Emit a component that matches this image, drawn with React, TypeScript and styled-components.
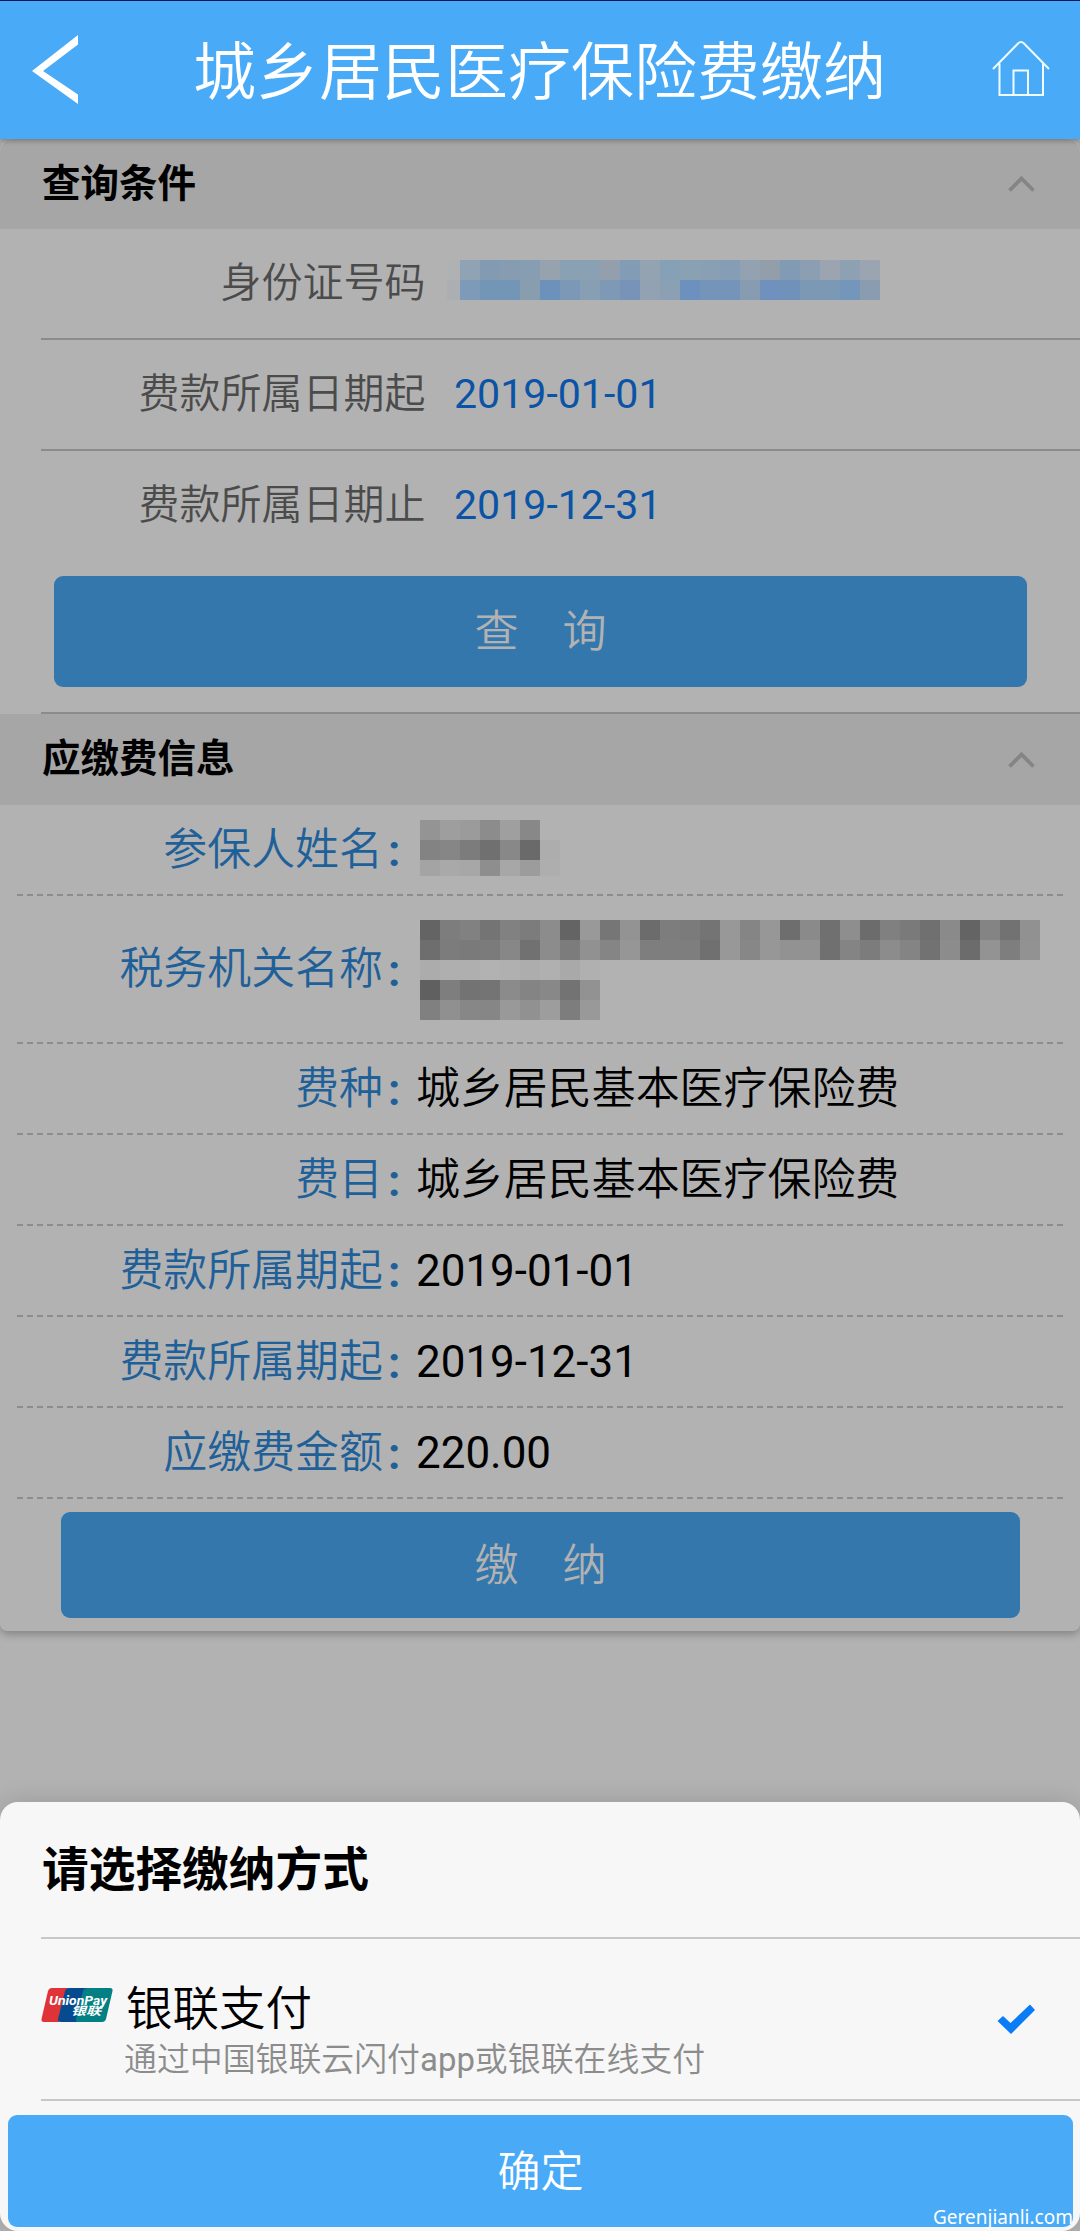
import React from "react";
import styled, { createGlobalStyle } from "styled-components";

const GlobalStyle = createGlobalStyle`
  * { box-sizing: border-box; }
  body {
    margin: 0;
    background: #b2b2b2;
    font-family: Roboto, "Noto Sans CJK SC", sans-serif;
  }
  button { font-family: inherit; border: 0; padding: 0; }
`;

const Page = styled.div`
  display: flex;
  flex-direction: column;
  width: 1080px;
  height: 2231px;
  overflow: hidden;
  background: #b2b2b2;
`;

const Header = styled.header`
  display: flex;
  align-items: center;
  flex: none;
  height: 139px;
  padding: 0 28px 0 30px;
  border-top: 1px solid #08155c;
  background: #49aaf7;
  z-index: 1;
  box-shadow: 0 1px 6px rgba(0, 0, 0, 0.35);
`;

const HeaderIcon = styled.svg`
  display: block;
  flex: none;
  width: 60px;
  height: 76px;
`;

const Title = styled.h1`
  flex: 1;
  margin: 0;
  padding: 6px 3px 0 0;
  text-align: center;
  font-size: 63px;
  font-weight: 350;
  line-height: 90px;
  color: #fff;
`;

const Card = styled.main`
  flex: none;
  height: 1492px;
  background: #b2b2b2;
  border-radius: 10px 10px 7px 7px;
  box-shadow: 0 3px 8px rgba(0, 0, 0, 0.28);
`;

const SectionHead = styled.div<{ $height: number; $first?: boolean }>`
  display: flex;
  align-items: center;
  justify-content: space-between;
  height: ${(p) => p.$height}px;
  padding: 0 44px 0 42px;
  background: #a6a6a6;
  border-radius: ${(p) => (p.$first ? "14px 14px 0 0" : "0")};
`;

const SectionTitle = styled.h2`
  margin: 0;
  font-size: 38.5px;
  font-weight: 700;
  line-height: 1.2;
  color: #000;
`;

const Chevron = styled.svg`
  width: 30px;
  height: 20px;
`;

const FieldRow = styled.div<{ $line?: boolean }>`
  display: flex;
  align-items: center;
  height: 111px;
  margin-left: 41px;
  padding-bottom: ${(p) => (p.$line ? 1 : 3)}px;
  border-bottom: ${(p) => (p.$line ? "2px solid #8b8b8b" : "0")};
`;

const FieldLabel = styled.span`
  flex: none;
  width: 384.5px;
  text-align: right;
  font-size: 41px;
  font-weight: 350;
  line-height: 48px;
  color: #4b4b4b;
`;

const FieldValue = styled.span`
  margin-left: 28.5px;
  font-size: 41.1px;
  line-height: 48px;
  color: #0a53a6;
`;

const Shift = styled.div<{ $x: number; $y?: number }>`
  margin: ${(p) => p.$y ?? 0}px 0 0 ${(p) => p.$x}px;
`;

const QueryArea = styled.div`
  height: 152px;
  margin-left: 41px;
  padding: 14px 53px 0 13px;
  border-bottom: 2px solid #8b8b8b;
`;

const Button = styled.button<{ $height: number; $bright?: boolean }>`
  display: block;
  width: 100%;
  height: ${(p) => p.$height}px;
  border-radius: 9px;
  background: ${(p) => (p.$bright ? "#49aaf7" : "#3377ad")};
  color: ${(p) => (p.$bright ? "#fff" : "#b2b2b2")};
  font-size: ${(p) => (p.$bright ? 43 : 44)}px;
  font-weight: 350;
  line-height: ${(p) => p.$height + 2}px;
  text-align: center;
`;

const InfoRow = styled.div<{ $height: number }>`
  display: grid;
  grid-template-columns: 366px 33px 1fr;
  align-items: center;
  height: ${(p) => p.$height}px;
  margin: 0 14px 0 17px;
  padding-bottom: 2px;
  background: repeating-linear-gradient(to right, #8d8d8d 0 6px, #b2b2b2 6px 10px) left bottom / 100% 2px no-repeat;
  font-size: 43.95px;
  line-height: 52px;
`;

const InfoLabel = styled.span`
  text-align: right;
  font-weight: 350;
  color: #1f6099;
`;

const Colon = styled.b`
  padding: 3px 0 0 5px;
  color: #1f6099;
`;

const InfoValue = styled.span<{ $cjk?: boolean }>`
  font-weight: ${(p) => (p.$cjk ? 350 : 400)};
  color: #000;
`;

const PayArea = styled.div`
  padding: 13px 60px 0 61px;
`;

const MosaicRow = styled.div<{ $height: number }>`
  display: flex;
  height: ${(p) => p.$height}px;
`;

const MosaicCell = styled.i<{ $color: string; $width: number }>`
  flex: none;
  width: ${(p) => p.$width}px;
  background: #${(p) => p.$color};
`;

const Sheet = styled.section`
  flex: none;
  height: 429px;
  margin-top: auto;
  background: #f7f7f7;
  border-radius: 18px;
  box-shadow: 0 0 24px rgba(0, 0, 0, 0.14);
`;

const SheetHead = styled.div`
  display: flex;
  align-items: center;
  height: 137px;
  margin-left: 41px;
  padding-top: 1px;
  border-bottom: 2px solid #c8c8c8;
`;

const SheetTitle = styled.h2`
  margin: 0;
  padding-left: 1px;
  font-size: 46.7px;
  font-weight: 700;
  line-height: 1.2;
`;

const Option = styled.div`
  display: flex;
  height: 162px;
  margin-left: 41px;
  padding-top: 43px;
  border-bottom: 2px solid #c8c8c8;
`;

const Logo = styled.svg`
  flex: none;
  width: 72px;
  height: 36px;
  margin-top: 5px;
`;

const OptionText = styled.div`
  flex: 1;
  padding-left: 11px;
`;

const OptionName = styled.div`
  padding-left: 2px;
  font-size: 46.5px;
  font-weight: 350;
  line-height: 54px;
  color: #000;
`;

const OptionNote = styled.div`
  margin-top: 2px;
  font-size: 32.9px;
  font-weight: 350;
  line-height: 44px;
  color: #8c8c8c;
`;

const Latin = styled.span`
  font-weight: 400;
`;

const Check = styled.svg`
  flex: none;
  width: 40px;
  height: 32px;
  margin: 21px 44px 0 0;
`;

const ConfirmArea = styled.div`
  position: relative;
  padding: 14px 7px 0 8px;
`;

const Watermark = styled.span`
  position: absolute;
  right: 7px;
  bottom: -3px;
  font-family: "Noto Sans", "Open Sans", sans-serif;
  font-size: 19px;
  line-height: 26px;
  color: #fff;
`;

const idMosaic = [
  "b0b1b2 8fa3b5 829bb3 879cb1 869db2 97a2af 8aa0b3 8aa0b3 949fae 839cb6 93a3b2 86a0b5 8aa0b3 889fb4 869eb5 93a2b0 939eab 829bb5 8c9fb2 9ba4b0 8ea1b3 9ba5b2",
  "acafb1 7d9bb8 7396b7 7396b7 889dae 6c92bc 7b99b6 889eb2 7d99b6 7794b8 93a2b2 8ba0b3 6c91be 7495b9 7495b9 879cb1 7091bd 7091b9 7b98b5 7b98b5 7596bb 8a9db0",
];
const nameMosaic = [
  "949494 9e9e9e 9b9b9b 8c8c8c 9f9f9f 888888 b2b2b2",
  "838383 868686 7c7c7c 707070 888888 6a6a6a adadad",
  "a4a4a4 a9a9a9 a7a7a7 8e8e8e a7a7a7 9c9c9c aeaeae",
];
const gray = (s: string) => s.split(" ").map((v) => v + v + v).join(" ");
const orgMosaic = [
  gray("64 7d 81 74 81 7c 8c 64 99 76 93 6c 7d 7b 74 98 85 97 6e 8a 70 8e 6c 80 7a 70 8a 64 84 72 91"),
  gray("6e 7c 7a 7b 87 71 8c 7c 91 85 96 7e 7e 7e 70 98 87 97 92 92 70 84 7c 8c 84 72 8c 6c 93 7e 92"),
  gray("ac af af b2 b0 ad b0 a9 b0"),
  gray("60 7e 73 74 8b 84 88 73 92"),
  gray("80 90 87 86 99 91 9d 7d 99"),
];

type MosaicProps = { rows: string[]; firstWidth?: number; lastHeight?: number };

function Mosaic({ rows, firstWidth = 20, lastHeight = 20 }: MosaicProps) {
  return (
    <div>
      {rows.map((row, i) => (
        <MosaicRow key={i} $height={i === rows.length - 1 ? lastHeight : 20}>
          {row.split(" ").map((c, j) => (
            <MosaicCell key={j} $color={c} $width={j === 0 ? firstWidth : 20} />
          ))}
        </MosaicRow>
      ))}
    </div>
  );
}

function Section({ title, height, first }: { title: string; height: number; first?: boolean }) {
  return (
    <SectionHead $height={height} $first={first}>
      <SectionTitle>{title}</SectionTitle>
      <Chevron viewBox="0 0 30 20" fill="none" stroke="#858585" strokeWidth="3.8">
        <path d="M3.500 16.500 15.500 4.500 27.500 16.500" />
      </Chevron>
    </SectionHead>
  );
}

type InfoProps = { label: string; height?: number; cjk?: boolean; children: React.ReactNode };

function Info({ label, height = 91, cjk, children }: InfoProps) {
  return (
    <InfoRow $height={height}>
      <InfoLabel>{label}</InfoLabel>
      <Colon>:</Colon>
      <InfoValue $cjk={cjk}>{children}</InfoValue>
    </InfoRow>
  );
}

export default function App() {
  return (
    <Page>
      <GlobalStyle />
      <Header>
        <HeaderIcon viewBox="30 32 60 76">
          <path d="M78 35v9.500L43 71l35 23.500V104L32 71Z" fill="#fff" />
        </HeaderIcon>
        <Title>城乡居民医疗保险费缴纳</Title>
        <HeaderIcon viewBox="992 32 60 76" fill="none" stroke="#f0fdff" strokeWidth="2">
          <path d="M993 69 1018 43.500q3-3 6 0L1049 69M999.500 63.500V95h43.500V63.500M1013.500 95V70.500H1028V95" />
        </HeaderIcon>
      </Header>
      <Card>
        <Section title="查询条件" height={90} first />
        <FieldRow $line>
          <FieldLabel>身份证号码</FieldLabel>
          <Shift $x={21.5} $y={-7}>
            <Mosaic rows={idMosaic} firstWidth={13} />
          </Shift>
        </FieldRow>
        <FieldRow $line>
          <FieldLabel>费款所属日期起</FieldLabel>
          <FieldValue>2019-01-01</FieldValue>
        </FieldRow>
        <FieldRow>
          <FieldLabel>费款所属日期止</FieldLabel>
          <FieldValue>2019-12-31</FieldValue>
        </FieldRow>
        <QueryArea>
          <Button $height={111}>查　询</Button>
        </QueryArea>
        <Section title="应缴费信息" height={91} />
        <Info label="参保人姓名">
          <Shift $x={4} $y={-4}>
            <Mosaic rows={nameMosaic} lastHeight={16} />
          </Shift>
        </Info>
        <Info label="税务机关名称" height={148}>
          <Shift $x={4} $y={2}>
            <Mosaic rows={orgMosaic} />
          </Shift>
        </Info>
        <Info label="费种" cjk>城乡居民基本医疗保险费</Info>
        <Info label="费目" cjk>城乡居民基本医疗保险费</Info>
        <Info label="费款所属期起">2019-01-01</Info>
        <Info label="费款所属期起">2019-12-31</Info>
        <Info label="应缴费金额">220.00</Info>
        <PayArea>
          <Button $height={106}>缴　纳</Button>
        </PayArea>
      </Card>
      <Sheet>
        <SheetHead>
          <SheetTitle>请选择缴纳方式</SheetTitle>
        </SheetHead>
        <Option>
          <Logo viewBox="0 0 72 36">
            <path d="M11 1H27L18 35H3Q0 35 .500 32L7 4Q8 1 11 1Z" fill="#e03338" />
            <path d="M28 1H47L38 35H20Q16.500 35 17 32L24 4Q25 1 28 1Z" fill="#064b8f" />
            <path d="M47 1H69Q72 1 71.500 4L65 32Q64 35 61 35H37Q34 35 35 32L42 4Q43 1 47 1Z" fill="#038084" />
            <text x="8" y="18" fontSize="13" fontWeight="700" fontStyle="italic" fill="#fff" textLength="58" lengthAdjust="spacingAndGlyphs">UnionPay</text>
            <text x="30" y="28" fontSize="11.500" fontWeight="700" fontStyle="italic" fill="#fff" textLength="30" lengthAdjust="spacingAndGlyphs">银联</text>
          </Logo>
          <OptionText>
            <OptionName>银联支付</OptionName>
            <OptionNote>通过中国银联云闪付<Latin>app</Latin>或银联在线支付</OptionNote>
          </OptionText>
          <Check viewBox="0 0 40 32">
            <path d="M1.500 18 7 13 14.500 20 34 1.500 39 7 15 31Z" fill="#0a7cf5" />
          </Check>
        </Option>
        <ConfirmArea>
          <Button $height={112} $bright>确定</Button>
          <Watermark>Gerenjianli.com</Watermark>
        </ConfirmArea>
      </Sheet>
    </Page>
  );
}
